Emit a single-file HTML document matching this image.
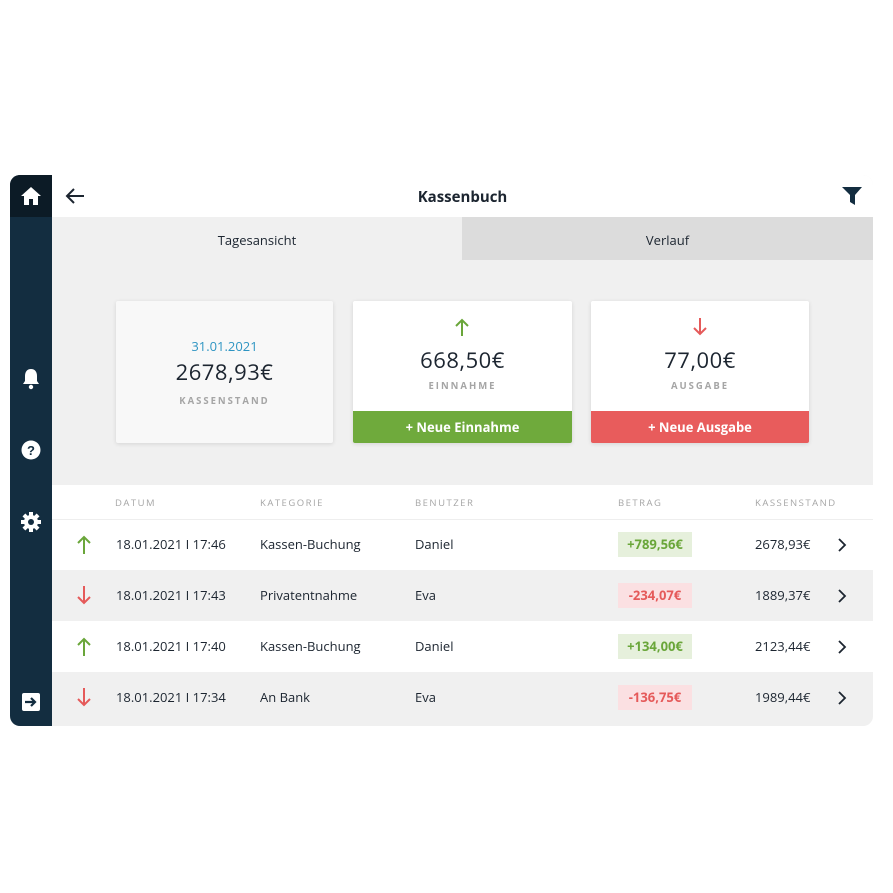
<!DOCTYPE html>
<html><head><meta charset="utf-8"><style>
*{margin:0;padding:0;box-sizing:border-box}
body{width:893px;height:893px;background:#fff;font-family:"Open Sans","Liberation Sans",sans-serif;position:relative;overflow:hidden;color:#1c2530}
.abs{position:absolute}
.app{left:10px;top:175px;width:863px;height:551px;border-radius:10px;overflow:hidden;background:#f0f0f0}
.side{left:0;top:0;width:42px;height:551px;background:#132d40}
.home{left:0;top:0;width:42px;height:42px;background:#0c1b26}
.hdr{left:42px;top:0;width:821px;height:42px;background:#fff}
.tab2{left:452px;top:42px;width:411px;height:43px;background:#dcdcdc}
.card{background:#fff;box-shadow:0 1px 4px rgba(0,0,0,.12);border-radius:2px}
.c{text-align:center;width:100%}
.big{font-size:22px;letter-spacing:.5px}
.lbl{font-size:9.5px;letter-spacing:2px;color:#a5a5a5;font-weight:bold}
.btn{left:0;bottom:0;width:100%;height:32px;color:#fff;font-weight:bold;font-size:13px;text-align:center;line-height:32px;border-radius:0 0 2px 2px}
.tbl{left:42px;top:310px;width:821px;height:241px;background:#fff}
.th{font-size:9.5px;letter-spacing:1.5px;color:#a5a5a5;top:11px}
.row{left:0;width:821px;height:51px;font-size:13px}
.row span{position:absolute;top:16px}
.g{background:#f0f0f0}
.badge{top:13px!important;height:25px;width:74px;line-height:25px;text-align:center;font-weight:bold;font-size:13px}
.bp{background:#e6f0dc;color:#6aa63a}.bn{background:#fbe0e2;color:#e55a5a}
.chev{left:785px;top:19px}
</style></head><body>
<div class="abs app">
 <div class="abs side"></div>
 <div class="abs home"><svg class="abs" style="left:11px;top:12px" width="20" height="18" viewBox="0 0 20 18"><path d="M10 0L0 9h3v9h5v-6h4v6h5V9h3z" fill="#fff"/></svg></div>
 <svg class="abs" style="left:12px;top:193px" width="18" height="22" viewBox="0 0 18 22"><path d="M9 1c-4 0-6 3-6 7v5l-2 3h16l-2-3V8c0-4-2-7-6-7z" fill="#fff"/><circle cx="9" cy="19" r="2.2" fill="#fff"/></svg>
 <svg class="abs" style="left:11px;top:265px" width="20" height="20" viewBox="0 0 20 20"><circle cx="10" cy="10" r="9.5" fill="#fff"/><text x="10" y="15" text-anchor="middle" font-size="13" font-weight="bold" fill="#132d40" font-family="Liberation Sans">?</text></svg>
 <svg class="abs" style="left:11px;top:337px" width="20" height="20" viewBox="0 0 20 20"><g fill="#fff"><circle cx="10" cy="10" r="7"/><rect x="8" y="0" width="4" height="20"/><rect x="0" y="8" width="20" height="4"/><rect x="8" y="0" width="4" height="20" transform="rotate(45 10 10)"/><rect x="8" y="0" width="4" height="20" transform="rotate(-45 10 10)"/></g><circle cx="10" cy="10" r="3" fill="#132d40"/></svg>
 <svg class="abs" style="left:12px;top:518px" width="18" height="18" viewBox="0 0 18 18"><rect width="18" height="18" rx="2" fill="#fff"/><path d="M3 9h10M9 5l4 4-4 4" stroke="#132d40" stroke-width="2.2" fill="none"/></svg>
 <div class="abs hdr">
  <svg class="abs" style="left:13px;top:12px" width="20" height="18" viewBox="0 0 20 18"><path d="M19 9H2M9 2L2 9l7 7" stroke="#1c2530" stroke-width="2" fill="none"/></svg>
  <div class="abs" style="left:0;width:821px;top:12px;text-align:center;font-weight:bold;font-size:15px">Kassenbuch</div>
  <svg class="abs" style="left:790px;top:12px" width="20" height="18" viewBox="0 0 20 18"><path d="M0 0h20l-7 8v10l-5-3V8z" fill="#132d40"/></svg>
 </div>
 <div class="abs" style="left:42px;top:56px;width:410px;text-align:center;font-size:13px">Tagesansicht</div>
 <div class="abs tab2"><div class="c" style="margin-top:14px;font-size:13px">Verlauf</div></div>
 <div class="abs card" style="left:106px;top:126px;width:217px;height:142px;background:#f8f8f8">
  <div class="c" style="margin-top:36px;color:#2d94c2;font-size:13px">31.01.2021</div>
  <div class="c big" style="margin-top:2px">2678,93€</div>
  <div class="c lbl" style="margin-top:7px">KASSENSTAND</div>
 </div>
 <div class="abs card" style="left:343px;top:126px;width:219px;height:142px">
  <svg class="abs" style="left:102px;top:17px" width="14" height="18" viewBox="0 0 14 18"><path d="M7 18V2M1 8l6-6 6 6" stroke="#6aa63a" stroke-width="2" fill="none"/></svg>
  <div class="c big" style="margin-top:44px">668,50€</div>
  <div class="c lbl" style="margin-top:4px">EINNAHME</div>
  <div class="abs btn" style="background:#6faa3c">+ Neue Einnahme</div>
 </div>
 <div class="abs card" style="left:581px;top:126px;width:218px;height:142px">
  <svg class="abs" style="left:102px;top:17px" width="14" height="18" viewBox="0 0 14 18"><path d="M7 0v16M1 10l6 6 6-6" stroke="#e55a5a" stroke-width="2" fill="none"/></svg>
  <div class="c big" style="margin-top:44px">77,00€</div>
  <div class="c lbl" style="margin-top:4px">AUSGABE</div>
  <div class="abs btn" style="background:#e85c5c">+ Neue Ausgabe</div>
 </div>
 <div class="abs tbl">
  <span class="abs th" style="left:63px">DATUM</span>
  <span class="abs th" style="left:208px">KATEGORIE</span>
  <span class="abs th" style="left:363px">BENUTZER</span>
  <span class="abs th" style="left:566px">BETRAG</span>
  <span class="abs th" style="left:703px">KASSENSTAND</span>
  <div class="abs" style="left:0;top:34px;width:821px;height:1px;background:#eee"></div>

  <div class="abs row" style="top:34px"><svg class="abs" style="left:25px;top:16px" width="14" height="19" viewBox="0 0 14 19"><path d="M7 19V2M1 8l6-6 6 6" stroke="#6aa63a" stroke-width="2" fill="none"/></svg><span style="left:64px">18.01.2021 I 17:46</span><span style="left:208px">Kassen-Buchung</span><span style="left:363px">Daniel</span><span class="badge bp" style="left:566px">+789,56€</span><span style="left:703px">2678,93€</span><svg class="abs chev" width="10" height="14" viewBox="0 0 10 14"><path d="M2 1l6 6-6 6" stroke="#1c2530" stroke-width="1.8" fill="none"/></svg></div>
  <div class="abs row g" style="top:85px"><svg class="abs" style="left:25px;top:16px" width="14" height="19" viewBox="0 0 14 19"><path d="M7 0v17M1 11l6 6 6-6" stroke="#e55a5a" stroke-width="2" fill="none"/></svg><span style="left:64px">18.01.2021 I 17:43</span><span style="left:208px">Privatentnahme</span><span style="left:363px">Eva</span><span class="badge bn" style="left:566px">-234,07€</span><span style="left:703px">1889,37€</span><svg class="abs chev" width="10" height="14" viewBox="0 0 10 14"><path d="M2 1l6 6-6 6" stroke="#1c2530" stroke-width="1.8" fill="none"/></svg></div>
  <div class="abs row" style="top:136px"><svg class="abs" style="left:25px;top:16px" width="14" height="19" viewBox="0 0 14 19"><path d="M7 19V2M1 8l6-6 6 6" stroke="#6aa63a" stroke-width="2" fill="none"/></svg><span style="left:64px">18.01.2021 I 17:40</span><span style="left:208px">Kassen-Buchung</span><span style="left:363px">Daniel</span><span class="badge bp" style="left:566px">+134,00€</span><span style="left:703px">2123,44€</span><svg class="abs chev" width="10" height="14" viewBox="0 0 10 14"><path d="M2 1l6 6-6 6" stroke="#1c2530" stroke-width="1.8" fill="none"/></svg></div>
  <div class="abs row g" style="top:187px;height:54px"><svg class="abs" style="left:25px;top:16px" width="14" height="19" viewBox="0 0 14 19"><path d="M7 0v17M1 11l6 6 6-6" stroke="#e55a5a" stroke-width="2" fill="none"/></svg><span style="left:64px">18.01.2021 I 17:34</span><span style="left:208px">An Bank</span><span style="left:363px">Eva</span><span class="badge bn" style="left:566px">-136,75€</span><span style="left:703px">1989,44€</span><svg class="abs chev" width="10" height="14" viewBox="0 0 10 14"><path d="M2 1l6 6-6 6" stroke="#1c2530" stroke-width="1.8" fill="none"/></svg></div>
 </div>
</div>
</body></html>
